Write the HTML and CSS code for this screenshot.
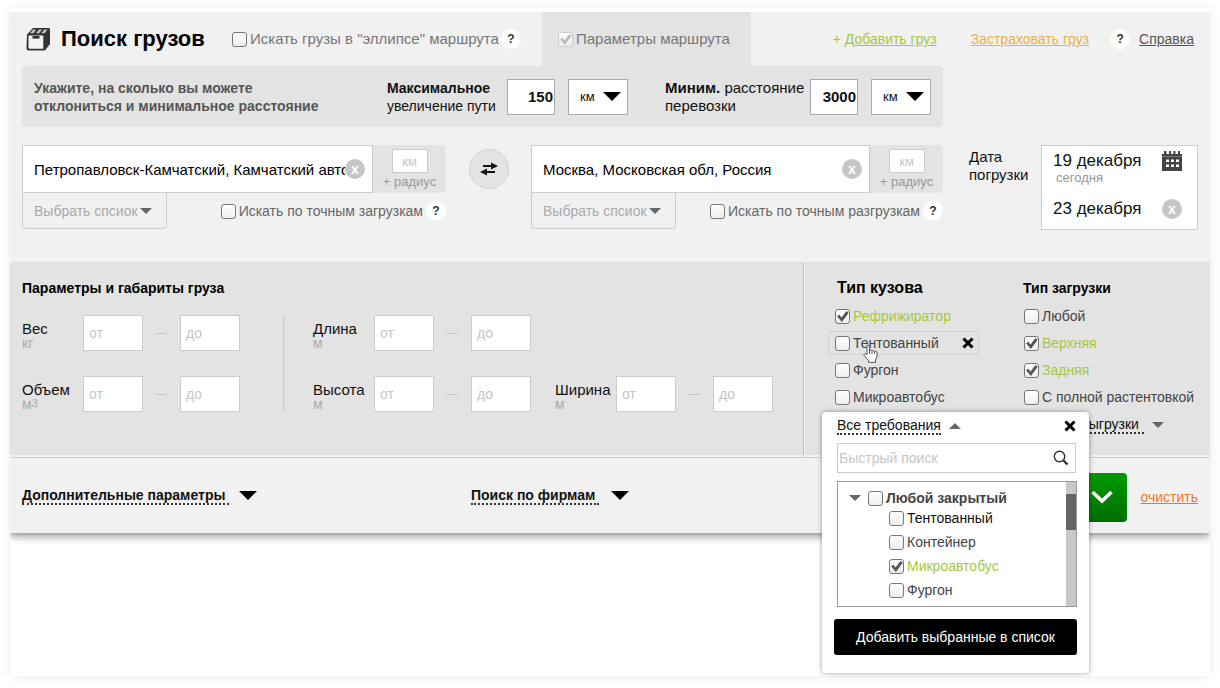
FILE: index.html
```html
<!DOCTYPE html>
<html lang="ru">
<head>
<meta charset="utf-8">
<title>Поиск грузов</title>
<link rel="stylesheet" href="styles.css">
</head>
<body>
<main class="page">
<form class="search">
  <header class="head">
    <div class="brand">
      <svg class="brand-icon" width="24" height="24" viewBox="0 0 24 24"><path d="M1 7.500L7 1h15.500Q24 1 24 2.500V17l-5 6.500H3Q.500 23.500.500 21z" fill="#333"/><path d="M2.500 8.500h14.800V21.800H4Q2.500 21.800 2.500 20.300z" fill="#f4f4f4"/><path d="M6.500 9h7v2.600h-7z" fill="#333"/><path d="M4 6.300l3-3.800h3.200L7.500 6.300zM10 6.300l3-3.800h3.200l-3 3.800zM15.300 6.300l3-3.800h3.200l-3 3.800z" fill="#c4c4c4"/></svg>
      <h1 class="title">Поиск грузов</h1>
    </div>
    <div class="option-row">
      <label class="check check-lg"><input type="checkbox"><span>Искать грузы в "эллипсе" маршрута</span></label>
      <button type="button" class="help">?</button>
    </div>
    <div class="tab">
      <label class="check check-lg check-muted"><input type="checkbox" checked><span>Параметры маршрута</span></label>
    </div>
    <nav class="links">
      <span class="link-add">+ <a href="#add">Добавить груз</a></span>
      <span class="link-insure"><a href="#insure">Застраховать груз</a></span>
      <span class="link-help"><button type="button" class="help">?</button><a href="#help">Справка</a></span>
    </nav>
  </header>

  <div class="top">
    <div class="top-main">
      <div class="deviation">
        <p class="deviation-hint">Укажите, на сколько вы можете<br>отклониться и минимальное расстояние</p>
        <label class="deviation-label deviation-label-sm" for="detour"><b>Максимальное</b><br>увеличение пути</label>
        <input class="number" id="detour" type="text" value="150">
        <span class="unit"><select aria-label="Единица увеличения пути"><option>км</option></select></span>
        <label class="deviation-label deviation-label-min" for="distance"><b>Миним.</b> расстояние<br>перевозки</label>
        <input class="number" id="distance" type="text" value="3000">
        <span class="unit"><select aria-label="Единица расстояния"><option>км</option></select></span>
      </div>

      <div class="route">
        <div class="point">
          <div class="point-field">
            <div class="place"><input type="text" aria-label="Откуда" value="Петропавловск-Камчатский, Камчатский автономный округ"><button type="button" class="clear" aria-label="Убрать">x</button></div>
            <label class="radius"><input type="text" placeholder="км"><span>+ радиус</span></label>
          </div>
          <div class="point-more">
            <button type="button" class="pick">Выбрать спсиок<i class="tri tri-sm"></i></button>
            <div class="exact"><label class="check check-soft"><input type="checkbox"><span>Искать по точным загрузкам</span></label><button type="button" class="help">?</button></div>
          </div>
        </div>
        <button type="button" class="swap" aria-label="Поменять местами"><svg width="18" height="14" viewBox="0 0 18 14"><path d="M3 4h9" stroke="#111" stroke-width="2"/><path d="M11 .500L18 4l-7 3.500z" fill="#111"/><path d="M6 10h9" stroke="#111" stroke-width="2"/><path d="M7 6.500L0 10l7 3.500z" fill="#111"/></svg></button>
        <div class="point">
          <div class="point-field">
            <div class="place"><input type="text" aria-label="Куда" value="Москва, Московская обл, Россия"><button type="button" class="clear" aria-label="Убрать">x</button></div>
            <label class="radius"><input type="text" placeholder="км"><span>+ радиус</span></label>
          </div>
          <div class="point-more">
            <button type="button" class="pick">Выбрать спсиок<i class="tri tri-sm"></i></button>
            <div class="exact"><label class="check check-soft"><input type="checkbox"><span>Искать по точным разгрузкам</span></label><button type="button" class="help">?</button></div>
          </div>
        </div>
      </div>
    </div>

    <div class="dates">
      <span class="dates-label">Дата<br>погрузки</span>
      <div class="dates-box">
        <button type="button" class="date"><span>19 декабря<small>сегодня</small></span>
          <svg width="20" height="20" viewBox="0 0 20 20"><path d="M0 3h2V0h2.500v3H7V0h2v3h2.500V0h2v3H16V0h2v3h2v17H0z" fill="#444"/><path d="M0 5.500h20" stroke="#777"/><path d="M4 8.500h3V11H4zM9 8.500h3V11H9zM14 8.500h3V11h-3zM4 13.500h3V16H4zM9 13.500h3V16H9zM14 13.500h3V16h-3z" fill="#fff"/></svg>
        </button>
        <div class="date"><span>23 декабря</span><button type="button" class="clear" aria-label="Убрать">x</button></div>
      </div>
    </div>
  </div>

  <div class="params">
    <section class="cargo">
      <h2 class="caption">Параметры и габариты груза</h2>
      <div class="cargo-grid">
        <div class="cargo-col">
          <div class="range"><label for="w1">Вес<small>кг</small></label><input id="w1" type="text" placeholder="от"><i></i><input type="text" aria-label="Вес до" placeholder="до"></div>
          <div class="range"><label for="v1">Объем<small>м<sup>3</sup></small></label><input id="v1" type="text" placeholder="от"><i></i><input type="text" aria-label="Объем до" placeholder="до"></div>
        </div>
        <div class="cargo-col cargo-size">
          <div class="range"><label for="l1">Длина<small>м</small></label><input id="l1" type="text" placeholder="от"><i></i><input type="text" aria-label="Длина до" placeholder="до"></div>
          <div class="cargo-pair">
            <div class="range"><label for="h1">Высота<small>м</small></label><input id="h1" type="text" placeholder="от"><i></i><input type="text" aria-label="Высота до" placeholder="до"></div>
            <div class="range"><label for="s1">Ширина<small>м</small></label><input id="s1" type="text" placeholder="от"><i></i><input type="text" aria-label="Ширина до" placeholder="до"></div>
          </div>
        </div>
      </div>
    </section>

    <section class="types">
      <div class="type">
        <h2 class="caption caption-lg">Тип кузова</h2>
        <div class="type-row"><label class="check"><input type="checkbox" checked><span>Рефрижиратор</span></label></div>
        <div class="type-row type-row-hover"><label class="check"><input type="checkbox"><span>Тентованный</span></label>
          <button type="button" class="close" aria-label="Удалить"><svg width="12" height="12" viewBox="0 0 12 12"><path d="M1.500 1.500l9 9M10.500 1.500l-9 9" stroke="#000" stroke-width="3"/></svg></button>
          <svg class="pointer" width="16" height="19" viewBox="0 0 16 19"><path d="M4 11V2.300Q4 1 5.200 1t1.300 1.300V7q0-1 1.200-1T9 7.200Q9.200 6.500 10.200 6.500T11.500 8q.2-.8 1.200-.8T14 8.800V13l-1.500 3v2.300H5.500V16.500L1 11.500Q.500 10.500 1.300 10T3 10z" fill="#fff" stroke="#555"/><path d="M6.500 7v3M9 7.500V10M11.500 8v2" stroke="#555" fill="none"/></svg>
        </div>
        <div class="type-row"><label class="check"><input type="checkbox"><span>Фургон</span></label></div>
        <div class="type-row"><label class="check"><input type="checkbox"><span>Микроавтобус</span></label></div>

        <div class="popup">
          <div class="popup-head">
            <button type="button" class="dotted">Все требования</button><i class="tri tri-up"></i>
            <button type="button" class="close" aria-label="Закрыть"><svg width="12" height="12" viewBox="0 0 12 12"><path d="M1.500 1.500l9 9M10.500 1.500l-9 9" stroke="#000" stroke-width="3"/></svg></button>
          </div>
          <div class="popup-search"><input type="text" aria-label="Быстрый поиск" placeholder="Быстрый поиск"><svg width="16" height="16" viewBox="0 0 16 16"><circle cx="6.500" cy="6.500" r="5.200" fill="none" stroke="#333" stroke-width="1.400"/><path d="M10.500 10.500l4 4" stroke="#333" stroke-width="2.400"/></svg></div>
          <div class="tree">
            <div class="tree-body">
              <div class="tree-root"><i class="tri tri-sm"></i><label class="check"><input type="checkbox"><b>Любой закрытый</b></label></div>
              <ul class="tree-items">
                <li><label class="check check-dark"><input type="checkbox"><span>Тентованный</span></label></li>
                <li><label class="check"><input type="checkbox"><span>Контейнер</span></label></li>
                <li><label class="check"><input type="checkbox" checked><span>Микроавтобус</span></label></li>
                <li><label class="check"><input type="checkbox"><span>Фургон</span></label></li>
              </ul>
            </div>
            <div class="scroll"><div class="scroll-thumb"></div></div>
          </div>
          <button type="button" class="popup-submit">Добавить выбранные в список</button>
        </div>
      </div>

      <div class="type type-load">
        <h2 class="caption">Тип загрузки</h2>
        <div class="type-row"><label class="check"><input type="checkbox"><span>Любой</span></label></div>
        <div class="type-row"><label class="check"><input type="checkbox" checked><span>Верхняя</span></label></div>
        <div class="type-row"><label class="check"><input type="checkbox" checked><span>Задняя</span></label></div>
        <div class="type-row"><label class="check"><input type="checkbox"><span>С полной растентовкой</span></label></div>
        <div class="type-more"><button type="button" class="dotted">Способ выгрузки</button><i class="tri tri-sm"></i></div>
      </div>
    </section>
  </div>

  <footer class="foot">
    <div class="foot-item foot-extra"><button type="button" class="dotted">Дополнительные параметры</button><i class="tri"></i></div>
    <div class="foot-item"><button type="button" class="dotted">Поиск по фирмам</button><i class="tri"></i></div>
    <div class="foot-actions">
      <button type="submit" class="submit" aria-label="Найти"><svg width="22" height="14" viewBox="0 0 22 14"><path d="M1.500 2L11 11 20.500 2" fill="none" stroke="#fff" stroke-width="3.600"/></svg></button>
      <button type="reset" class="reset">очистить</button>
    </div>
  </footer>
</form>
</main>
</body>
</html>
```
FILE: styles.css
```css
* { box-sizing: border-box; }
body {
  margin: 0;
  padding: 8px 10px 12px;
  min-height: 100vh;
  display: flex;
  background: #fff;
  color: #111;
  font: 14px/18px "Liberation Sans", Arial, sans-serif;
}
button, input, select { font: inherit; color: inherit; margin: 0; padding: 0; border: 0; background: none; border-radius: 0; }
button { cursor: pointer; }
input::placeholder { color: #c6c6c6; opacity: 1; }
h1, h2, p, ul { margin: 0; padding: 0; }
ul { list-style: none; }
svg { display: block; flex: none; }

.page { flex: 1; min-width: 0; padding-top: 4px; background: #fff; box-shadow: 0 0 10px rgba(0, 0, 0, .09); }
.search { background: #f1f1f1; box-shadow: 0 3px 8px rgba(0, 0, 0, .45); clip-path: inset(0 0 -200px 0); }

/* shared pieces */
.tri { flex: none; width: 0; height: 0; border: 9px solid transparent; border-top-color: #000; border-bottom: 0; }
.tri-sm { border-width: 6px 6px 0; border-top-color: #666; }
.tri-up { border-width: 0 6px 6px; border-bottom: 6px solid #666; }

.check { display: flex; align-items: center; gap: 3px; color: #444; white-space: nowrap; }
.check input {
  appearance: none;
  flex: none;
  position: relative;
  width: 15px;
  height: 15px;
  border: 1px solid #777;
  border-radius: 3px;
  background: linear-gradient(#fff, #eee);
}
.check input:checked::after {
  content: "";
  position: absolute;
  inset: 1px 0 0 0;
  background: #555;
  clip-path: polygon(8% 48%, 25% 35%, 43% 58%, 80% 4%, 98% 18%, 45% 95%);
}
.check input:checked + span { color: #a5c73c; }
.check-lg { font-size: 15px; color: #777; }
.check-soft { color: #666; }
.check-dark { color: #111; }
.check-muted input { border-color: #ccc; }
.check-muted input:checked::after { background: #bbb; }
.check-muted input:checked + span { color: #777; }

.help { flex: none; width: 20px; height: 20px; border-radius: 50%; background: #fff; font: bold 12px/20px "Liberation Sans", Arial, sans-serif; color: #333; }
.clear { flex: none; width: 20px; height: 20px; border-radius: 50%; background: #c6c6c6; color: #fff; font: bold 14px/18px "Liberation Sans", Arial, sans-serif; }
.dotted { line-height: 16px; border-bottom: 2px dotted #333; white-space: nowrap; }
.caption { font-size: 14px; line-height: 18px; font-weight: bold; color: #000; }
.caption-lg { font-size: 16px; }

/* header */
.head { display: grid; grid-template-columns: 210px 310px 209px 1fr; min-height: 54px; padding: 0 16px 0 12px; }
.brand, .option-row, .tab, .links { display: flex; align-items: center; }
.brand { gap: 11px; padding-left: 4px; }
.title { font-size: 22px; line-height: 28px; color: #000; white-space: nowrap; }
.option-row { gap: 2px; }
.tab { padding-left: 16px; background: #e3e3e3; }
.links { justify-content: flex-end; gap: 34px; white-space: nowrap; }
.links a { color: inherit; }
.link-add { color: #a5c73c; }
.link-insure { color: #efb03f; }
.link-help { display: flex; align-items: center; gap: 9px; margin-left: -13px; color: #555; }

/* route */
.top { display: grid; grid-template-columns: 1fr 229px; gap: 26px; padding: 0 12px 32px; }
.deviation {
  display: grid;
  grid-template-columns: 1fr 120px 48px 13px 60px 37px 145px 48px 13px 60px;
  align-items: center;
  min-height: 61px;
  padding: 0 12px;
  border-radius: 4px;
  background: #e3e3e3;
}
.deviation > :nth-child(4) { grid-column: 5; }
.deviation > :nth-child(5) { grid-column: 7; }
.deviation > :nth-child(7) { grid-column: 10; }
.deviation-hint { font-weight: bold; color: #555; }
.deviation-label { font-size: 15px; color: #111; }
.deviation-label-sm { font-size: 14px; }
.number { width: 100%; height: 36px; border: 1px solid #aaa; background: #fff; font-size: 15px; font-weight: bold; text-align: right; padding-right: 1px; }
.unit { display: flex; align-items: center; height: 36px; padding: 0 6px 0 11px; border: 1px solid #aaa; background: #fff; }
.unit select { appearance: none; flex: 1; min-width: 0; font-size: 13px; }
.unit::after { content: ""; border: 9px solid transparent; border-top-color: #000; border-bottom: 0; }

.route { display: grid; grid-template-columns: 424fr 85px 412fr; margin-top: 18px; }
.point-field { display: flex; }
.place { flex: 1; min-width: 0; display: flex; align-items: center; height: 48px; padding: 0 7px 0 11px; border: 1px solid #ccc; background: #fff; }
.place input { flex: 1; min-width: 0; height: 44px; font-size: 15px; color: #000; }
.radius { flex: none; width: 73px; padding-top: 4px; border-radius: 0 4px 4px 0; background: #e3e3e3; text-align: center; color: #999; font-size: 13px; line-height: 18px; }
.radius input { display: block; width: 36px; height: 24px; margin: 0 auto; border: 1px solid #ccc; background: #fff; text-align: center; }
.point-more { display: flex; justify-content: space-between; align-items: center; height: 36px; }
.pick { display: flex; align-items: center; gap: 2px; height: 36px; padding: 0 14px 0 11px; border: 1px solid #ccc; border-top: 0; border-radius: 0 0 4px 4px; color: #aaa; }
.exact { display: flex; align-items: center; gap: 3px; }
.swap { justify-self: center; display: flex; align-items: center; justify-content: center; width: 40px; height: 40px; margin-top: 4px; border: 1px solid #d2d2d2; border-radius: 50%; background: #e3e3e3; }

.dates { display: flex; justify-content: space-between; padding-top: 79px; }
.dates-label { padding-top: 3px; font-size: 15px; }
.dates-box { display: flex; flex-direction: column; justify-content: space-between; width: 157px; height: 85px; padding: 5px 15px 10px 11px; border: 1px solid #ccc; background: #fff; }
.date { display: flex; justify-content: space-between; align-items: flex-start; text-align: left; font-size: 17px; line-height: 20px; color: #111; }
.date small { display: block; padding-left: 3px; font-size: 13px; line-height: 13px; color: #999; }

/* cargo and types */
.params { display: flex; border-bottom: 1px solid #ccc; background: #e3e3e3; box-shadow: inset 0 -2px #f4f4f4, inset 0 1px #dcdcdc; }
.cargo { flex: 1; padding: 17px 12px 45px; border-right: 1px solid #c4c4c4; }
.cargo-grid { display: flex; margin-top: 18px; }
.cargo-col { display: flex; flex-direction: column; gap: 25px; }
.cargo-size { margin-left: 43px; padding-left: 29px; border-left: 1px solid #c8c8c8; }
.cargo-pair { display: flex; gap: 24px; }
.range { display: flex; align-items: center; }
.range label { width: 61px; padding-top: 5px; font-size: 15px; line-height: 14px; color: #111; }
.range small { display: block; font-size: 14px; color: #aaa; }
.range sup { font-size: 11px; line-height: 8px; vertical-align: 2px; }
.range input { width: 60px; height: 36px; padding-left: 5px; border: 1px solid #ccc; background: #fff; }
.range i { width: 12px; margin: 0 13px 0 12px; border-top: 1px solid #c4c4c4; }

.types { flex: none; display: flex; width: 406px; padding: 17px 0 0 23px; border-left: 1px solid #f0f0f0; }
.type { position: relative; width: 151px; }
.type .caption { padding: 0 0 0 9px; margin-bottom: 7px; }
.type-row { position: relative; display: flex; align-items: center; justify-content: space-between; height: 24px; margin-bottom: 3px; padding: 0 4px 0 6px; border: 1px solid transparent; border-radius: 3px; }
.type-row-hover { border-color: #d0d0d0; }
.type-load { width: auto; margin-left: 38px; }
.type-load .caption { padding-left: 6px; }
.type-more { display: flex; align-items: center; gap: 8px; padding: 4px 0 0 12px; }
.type-more .dotted { padding-right: 5px; }
.close { flex: none; }
.pointer { position: absolute; left: 34px; top: 12px; }

.popup { position: absolute; z-index: 2; left: -6px; top: 133px; width: 267px; padding: 5px 12px 18px; border-radius: 4px; background: #fff; box-shadow: 0 0 5px rgba(0, 0, 0, .4); }
.popup-head { display: flex; align-items: center; gap: 8px; padding: 0 1px 0 3px; }
.popup-head .close { margin-left: auto; }
.popup-search { display: flex; align-items: center; height: 30px; margin: 8px 1px 8px 3px; padding: 0 6px 0 1px; border: 1px solid #ccc; }
.popup-search input { flex: 1; min-width: 0; height: 28px; }
.tree { display: flex; height: 126px; margin: 0 0 12px 3px; border: 1px solid #999; }
.tree-body { flex: 1; padding: 5px 0 0 11px; overflow: hidden; }
.tree-root { display: flex; align-items: center; gap: 7px; height: 22px; }
.tree-items { padding-left: 40px; }
.tree-items li { height: 24px; }
.scroll { width: 10px; padding-top: 12px; background: #c8c8c8; }
.scroll-thumb { height: 36px; background: #666; }
.popup-submit { display: block; width: 100%; height: 36px; border-radius: 3px; background: #000; color: #fff; }

/* footer */
.foot { display: flex; align-items: center; min-height: 75px; padding: 0 12px; }
.foot-item { display: flex; align-items: center; gap: 12px; font-weight: bold; }
.foot-item .dotted { padding-right: 4px; }
.foot-extra { width: 449px; gap: 10px; }
.foot-actions { display: flex; align-items: center; gap: 13px; margin-left: auto; padding-top: 3px; }
.submit { display: flex; align-items: center; justify-content: flex-end; width: 200px; height: 49px; padding-right: 14px; border-radius: 4px; background: linear-gradient(#009a00, #006e00); }
.reset { color: #f0762b; text-decoration: underline; }
```
